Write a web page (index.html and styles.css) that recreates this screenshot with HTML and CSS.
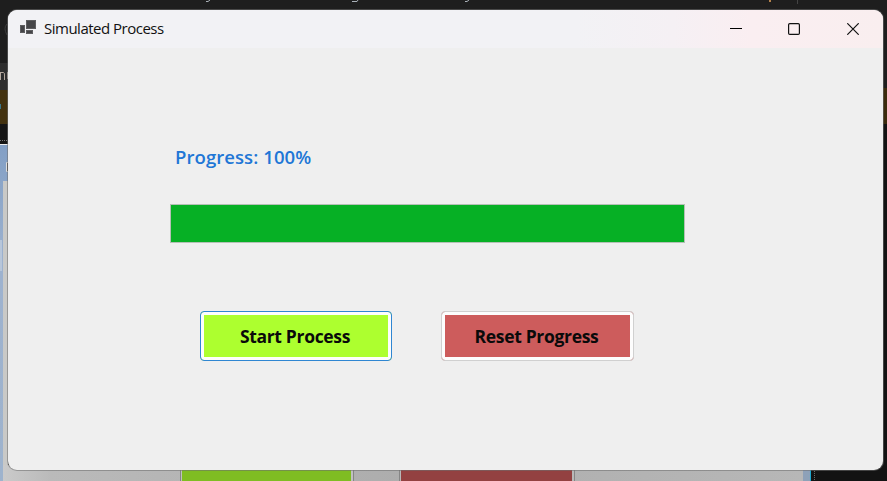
FILE: index.html
```
<!DOCTYPE html>
<html lang="en">
<head>
<meta charset="utf-8">
<title>Simulated Process</title>
<link rel="stylesheet" href="styles.css">
</head>
<body>
<div class="desktop">
  <svg class="backdrop" width="887" height="481" aria-hidden="true">
    <defs>
      <linearGradient id="panel" x1="0" x2="1"><stop offset="0" stop-color="#cacaca"/><stop offset=".06" stop-color="#bababa"/><stop offset=".5" stop-color="#adadad"/><stop offset="1" stop-color="#b7b7b7"/></linearGradient>
      <linearGradient id="side" x1="0" x2="0" y1="0" y2="1"><stop offset="0" stop-color="#829fc5"/><stop offset=".35" stop-color="#9db2cf"/><stop offset="1" stop-color="#9eb3cd"/></linearGradient>
    </defs>
    <rect width="887" height="481" fill="#1e1e1e"/>
    <rect y="63" width="8" height="27" fill="#2e2e2e"/>
    <rect y="90" width="8" height="34" fill="#43320f"/>
    <rect y="124" width="8" height="20" fill="#151515"/>
    <rect x="883" y="88" width="4" height="36" fill="#3b2b0c"/>
    <rect x="883" y="124" width="4" height="357" fill="#131313"/>
    <path d="M7 24Q3 28 7 35" fill="none" stroke="#3c3c3c"/>
    <path d="M0 140.5H8" stroke="#777" stroke-dasharray="1 1"/>
    <path d="M0 72.500H3.500Q4.500 72.500 4.500 75V80M.5 73V80M7.500 72V79" fill="none" stroke="#b5a99f"/>
    <rect y="104" width="1" height="5" fill="#3b7688"/>
    <rect y="144" width="8" height="337" fill="url(#side)"/>
    <rect y="144" width="8" height="1" fill="#eee"/>
    <path d="M8 162.500H6.500V171.500H8" fill="#555" stroke="#ddd"/>
    <path d="M0 240H2V271H0Z" fill="#b7c6da"/>
    <rect x="3" y="181" width="5" height="300" fill="#c9c9c7"/>
    <rect x="3" y="465" width="800" height="16" fill="url(#panel)"/>
    <rect x="803" y="465" width="7" height="16" fill="#8ea1b8"/>
    <rect x="810" y="465" width="1" height="16" fill="#20a7ce"/>
    <rect x="811" y="465" width="76" height="16" fill="#131313"/>
    <path d="M814.500 471V481" stroke="#666" stroke-dasharray="1 1"/>
    <path d="M180.500 465V481M353.500 465V481M399.500 465V481M574.500 465V481" stroke="#858585"/>
    <rect x="181" y="465" width="172" height="16" fill="#c0c0c0"/>
    <rect x="182" y="465" width="169" height="16" fill="#7fbd22"/>
    <rect x="400" y="465" width="174" height="16" fill="#b8b8b8"/>
    <rect x="401" y="465" width="171" height="16" fill="#934141"/>
    <path d="M206 1.500H208L210 0M352 1.500H357L358 0M465 1.500H467L469 0" fill="none" stroke="#a9b1b8"/>
    <rect x="769" width="2" height="2" fill="#b3814b"/>
    <rect x="797" width="1" height="4" fill="#444"/>
  </svg>
  <main class="window">
    <header class="titlebar">
      <svg class="app-icon" width="16" height="16" viewBox="0 0 16 16" aria-hidden="true">
        <path d="M0 5H5V13H0ZM6 0H16V9H6ZM6 10H13V14H6Z" fill="#454548"/>
        <path d="M.5 5.500H4.500V12.500H.5ZM6.500 .5H15.500V8.500H6.500ZM6.500 10.500H12.500V13.500H6.500Z" fill="none" stroke="#777" stroke-opacity=".5"/>
      </svg>
      <h1 class="title"><span class="title-text">Simulated Process</span></h1>
      <div class="controls">
        <svg width="12" height="12"><path d="M0 5.500H12" stroke="#000"/></svg>
        <svg width="12" height="12"><rect x=".6" y=".6" width="10.800" height="10.800" rx="1.200" fill="none" stroke="#111" stroke-width="1.200"/></svg>
        <svg width="12" height="12"><path d="M.3.3L11.700 11.700M11.700.3L.3 11.700" stroke="#111" stroke-width="1.200"/></svg>
      </div>
    </header>
    <section class="content">
      <div class="label"><span>Progress: 100%</span></div>
      <div class="progress"></div>
      <div class="actions">
        <button class="button start"><span>Start Process</span></button>
        <button class="button reset"><span>Reset Progress</span></button>
      </div>
    </section>
  </main>
</div>
</body>
</html>
```
FILE: styles.css
```
* { box-sizing: border-box; }
body { margin: 0; font-family: "Open Sans", "Noto Sans", sans-serif; }
.desktop { position: relative; width: 887px; height: 481px; overflow: hidden; background: #1e1e1e; }
.backdrop { display: block; }
.window {
  position: absolute; left: 8px; top: 10px; width: 875px; height: 460px;
  background: #efefef; border-radius: 9px; overflow: hidden;
  box-shadow: 0 0 0 1px rgba(110, 110, 110, .55);
}
.titlebar {
  display: flex; align-items: center; height: 38px; padding: 0 24px 0 12px;
  background: linear-gradient(90deg, #f2f2f5 0%, #f2f2f5 65%, #f5f0f4 76%, #faeef1 85%, #f9eeef 100%);
}
.app-icon { margin-top: -2px; }
.title { margin: -2px 0 0 8px; font-size: 15px; line-height: 20px; font-weight: 400; color: #111; white-space: nowrap; }
.title-text { display: inline-block; letter-spacing: -.5px; }
.controls { display: flex; margin-left: auto; }
.controls svg + svg { margin-left: 46px; }
.controls svg:last-child { margin-left: 47px; }
.content { padding: 96px 198px 0 162px; }
.label { height: 26px; padding-left: 5px; font-size: 18.500px; line-height: 26px; font-weight: 600; color: #2076d6; white-space: nowrap; letter-spacing: .08px; }
.progress { height: 39px; margin-top: 34px; border: 1px solid #b5c0b6; background: #06b025; }
.actions { display: flex; gap: 49px; margin: 68px 0 0 30px; }
.button {
  height: 50px; padding: 0; border: 1px solid #d0d0d0; border-radius: 4px;
  box-shadow: inset 0 0 0 3px #fdfdfd;
  font: 700 17.500px/46px "Open Sans", sans-serif; color: #0a0a0a; white-space: nowrap; letter-spacing: -.32px;
}
.button span { position: relative; left: -1px; }
.start { width: 192px; border-color: #2f86d2; background: #adff2f; }
.reset { width: 193px; background: #cd5c5c; }
```
